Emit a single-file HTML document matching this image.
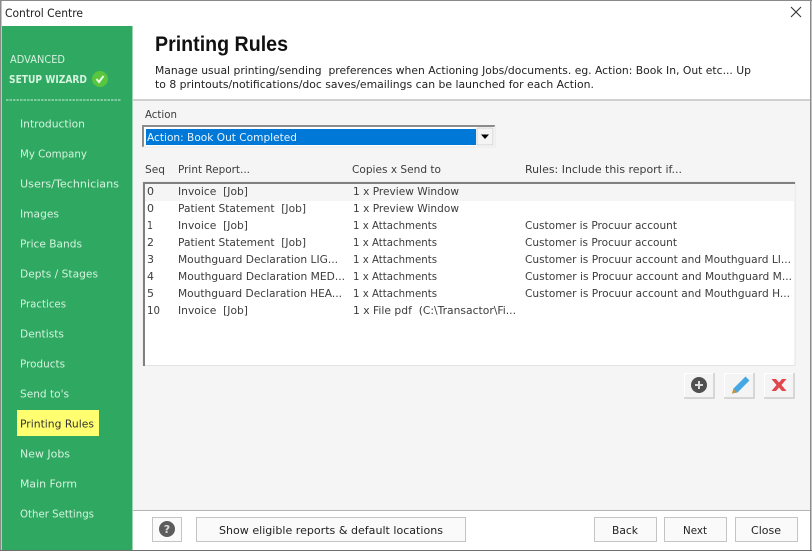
<!DOCTYPE html>
<html><head><meta charset="utf-8"><title>Control Centre</title>
<style>
html,body{margin:0;padding:0;background:#fff;width:812px;height:551px;overflow:hidden}
svg{display:block}
text{font-family:"DejaVu Sans",sans-serif;font-size:11px;fill:#3c3c3c;white-space:pre}
.s text{fill:#d6f3de}
.d text{fill:#222}
</style></head><body>
<svg width="812" height="551" viewBox="0 0 812 551" xmlns="http://www.w3.org/2000/svg" xml:space="preserve">
<rect width="812" height="551" fill="#fff"/>
<rect x="133" y="100" width="677" height="410" fill="#f5f5f5"/>
<rect x="133" y="99" width="677" height="2" fill="#d0d0d0"/>
<rect x="133" y="510" width="677" height="1" fill="#b4b4b4"/>
<rect x="0" y="0" width="812" height="1" fill="#8a8a8a"/>
<rect x="0" y="0" width="1.5" height="551" fill="#8a8a8a"/>
<rect x="810" y="0" width="1.5" height="551" fill="#8a8a8a"/>
<rect x="0" y="550" width="812" height="1" fill="#6e6e6e"/>
<rect x="2" y="26" width="130.500" height="524" fill="#2fa862"/>
<text x="5" y="17" textLength="78" lengthAdjust="spacingAndGlyphs" style="fill:#222;font-size:11.500px">Control Centre</text>
<path d="M791 7l10 10M801 7l-10 10" stroke="#333" stroke-width="1.100" fill="none"/>
<g class="s">
<text x="10" y="63" textLength="55" lengthAdjust="spacingAndGlyphs">ADVANCED</text>
<text x="9" y="83" textLength="78" lengthAdjust="spacingAndGlyphs" style="font-weight:700;font-size:10.500px">SETUP WIZARD</text>
<rect x="17" y="410" width="82" height="26" fill="#ffff70"/>
<text x="20" y="127.500" textLength="65" lengthAdjust="spacingAndGlyphs">Introduction</text>
<text x="20" y="157.500" textLength="67" lengthAdjust="spacingAndGlyphs">My Company</text>
<text x="20" y="187.500" textLength="99" lengthAdjust="spacingAndGlyphs">Users/Technicians</text>
<text x="20" y="217.500" textLength="39" lengthAdjust="spacingAndGlyphs">Images</text>
<text x="20" y="247.500" textLength="62" lengthAdjust="spacingAndGlyphs">Price Bands</text>
<text x="20" y="277.500" textLength="78" lengthAdjust="spacingAndGlyphs">Depts / Stages</text>
<text x="20" y="307.500" textLength="46" lengthAdjust="spacingAndGlyphs">Practices</text>
<text x="20" y="337.500" textLength="44" lengthAdjust="spacingAndGlyphs">Dentists</text>
<text x="20" y="367.500" textLength="45" lengthAdjust="spacingAndGlyphs">Products</text>
<text x="20" y="397.500" textLength="49" lengthAdjust="spacingAndGlyphs">Send to's</text>
<text x="20" y="427.500" textLength="74" lengthAdjust="spacingAndGlyphs" style="fill:#333">Printing Rules</text>
<text x="20" y="457.500" textLength="50" lengthAdjust="spacingAndGlyphs">New Jobs</text>
<text x="20" y="487.500" textLength="57" lengthAdjust="spacingAndGlyphs">Main Form</text>
<text x="20" y="517.500" textLength="74" lengthAdjust="spacingAndGlyphs">Other Settings</text>
</g>
<circle cx="100" cy="79" r="8" fill="#58c63e"/>
<path d="M96.500 79l2.500 3 4.500-6" stroke="#e8fbe4" stroke-width="2" fill="none"/>
<line x1="6" y1="100" x2="121" y2="100" stroke="#cfeeda" stroke-width="1" stroke-dasharray="2.500 1"/>

<text x="155" y="51" textLength="133" lengthAdjust="spacingAndGlyphs" style="font-family:'Liberation Sans',sans-serif;font-size:21px;font-weight:700;fill:#111">Printing Rules</text>
<g class="d">
<text x="155" y="74" textLength="596" lengthAdjust="spacingAndGlyphs">Manage usual printing/sending  preferences when Actioning Jobs/documents. eg. Action: Book In, Out etc... Up</text>
<text x="155" y="88" textLength="439" lengthAdjust="spacingAndGlyphs">to 8 printouts/notifications/doc saves/emailings can be launched for each Action.</text>
</g>
<text x="145" y="118" textLength="32" lengthAdjust="spacingAndGlyphs">Action</text>

<rect x="143" y="126" width="352" height="21" fill="#fff"/>
<path d="M143 147V126H495" fill="none" stroke="#8c8c8c" stroke-width="2"/>
<path d="M143 147H495V126" fill="none" stroke="#e6e6e6" stroke-width="1"/>
<rect x="146" y="129" width="330" height="16" fill="#0078d7"/>
<rect x="477" y="128" width="16" height="17" fill="#f4f4f4" stroke="#b0b0b0" stroke-width="0.500"/>
<path d="M481 134.500h8l-4 4.500z" fill="#000"/>
<text x="147" y="141" textLength="150" lengthAdjust="spacingAndGlyphs" style="fill:#e8f4ff">Action: Book Out Completed</text>

<text x="145" y="173" textLength="20" lengthAdjust="spacingAndGlyphs">Seq</text>
<text x="178" y="173" textLength="72" lengthAdjust="spacingAndGlyphs">Print Report...</text>
<text x="352" y="173" textLength="89" lengthAdjust="spacingAndGlyphs">Copies x Send to</text>
<text x="525" y="173" textLength="157" lengthAdjust="spacingAndGlyphs">Rules: Include this report if...</text>

<rect x="143" y="182" width="652" height="183.500" fill="#fff" stroke="#e4e4e4" stroke-width="1"/>
<rect x="145" y="184" width="649" height="17" fill="#f5f5f5"/>
<path d="M144 366V183H795" fill="none" stroke="#808080" stroke-width="2"/>

<text x="147" y="195" textLength="7" lengthAdjust="spacingAndGlyphs">0</text>
<text x="178" y="195" textLength="70" lengthAdjust="spacingAndGlyphs">Invoice  [Job]</text>
<text x="353" y="195" textLength="106" lengthAdjust="spacingAndGlyphs">1 x Preview Window</text>
<text x="147" y="212" textLength="7" lengthAdjust="spacingAndGlyphs">0</text>
<text x="178" y="212" textLength="128" lengthAdjust="spacingAndGlyphs">Patient Statement  [Job]</text>
<text x="353" y="212" textLength="106" lengthAdjust="spacingAndGlyphs">1 x Preview Window</text>
<text x="147" y="229" textLength="6" lengthAdjust="spacingAndGlyphs">1</text>
<text x="178" y="229" textLength="70" lengthAdjust="spacingAndGlyphs">Invoice  [Job]</text>
<text x="353" y="229" textLength="84" lengthAdjust="spacingAndGlyphs">1 x Attachments</text>
<text x="525" y="229" textLength="152" lengthAdjust="spacingAndGlyphs">Customer is Procuur account</text>
<text x="147" y="246" textLength="7" lengthAdjust="spacingAndGlyphs">2</text>
<text x="178" y="246" textLength="128" lengthAdjust="spacingAndGlyphs">Patient Statement  [Job]</text>
<text x="353" y="246" textLength="84" lengthAdjust="spacingAndGlyphs">1 x Attachments</text>
<text x="525" y="246" textLength="152" lengthAdjust="spacingAndGlyphs">Customer is Procuur account</text>
<text x="147" y="263" textLength="7" lengthAdjust="spacingAndGlyphs">3</text>
<text x="178" y="263" textLength="160" lengthAdjust="spacingAndGlyphs">Mouthguard Declaration LIG...</text>
<text x="353" y="263" textLength="84" lengthAdjust="spacingAndGlyphs">1 x Attachments</text>
<text x="525" y="263" textLength="266" lengthAdjust="spacingAndGlyphs">Customer is Procuur account and Mouthguard LI...</text>
<text x="147" y="280" textLength="7" lengthAdjust="spacingAndGlyphs">4</text>
<text x="178" y="280" textLength="167" lengthAdjust="spacingAndGlyphs">Mouthguard Declaration MED...</text>
<text x="353" y="280" textLength="84" lengthAdjust="spacingAndGlyphs">1 x Attachments</text>
<text x="525" y="280" textLength="267" lengthAdjust="spacingAndGlyphs">Customer is Procuur account and Mouthguard M...</text>
<text x="147" y="297" textLength="7" lengthAdjust="spacingAndGlyphs">5</text>
<text x="178" y="297" textLength="164" lengthAdjust="spacingAndGlyphs">Mouthguard Declaration HEA...</text>
<text x="353" y="297" textLength="84" lengthAdjust="spacingAndGlyphs">1 x Attachments</text>
<text x="525" y="297" textLength="265" lengthAdjust="spacingAndGlyphs">Customer is Procuur account and Mouthguard H...</text>
<text x="147" y="314" textLength="13" lengthAdjust="spacingAndGlyphs">10</text>
<text x="178" y="314" textLength="70" lengthAdjust="spacingAndGlyphs">Invoice  [Job]</text>
<text x="353" y="314" textLength="163" lengthAdjust="spacingAndGlyphs">1 x File pdf  (C:\Transactor\Fi...</text>

<g fill="#f4f4f4">
<rect x="684.500" y="373.500" width="29" height="24" stroke="#fff"/>
<rect x="724.500" y="373.500" width="29" height="24" stroke="#fff"/>
<rect x="764.500" y="373.500" width="29" height="24" stroke="#fff"/>
</g>
<path d="M714 373V398H684M754 373V398H724M794 373V398H764" fill="none" stroke="#c0c0c0" stroke-width="1.200"/>
<circle cx="699" cy="385" r="8" fill="#505050"/>
<path d="M695 385h8M699 381v8" stroke="#dcdcdc" stroke-width="2"/>
<path d="M732 393.500l1.500-5 12-12 4 4-12 12z" fill="#45a8e2"/>
<path d="M733.500 388.500l-1.500 5 5-1.200z" fill="#c9923a"/>
<path d="M771.500 379l4.500 0 3 3.500 3-3.500 4.500 0-5 6 5 6-4.500 0-3-3.500-3 3.500-4.500 0 5-6z" fill="#e0474c"/>

<g fill="#fafafa" stroke="#c4c4c4">
<rect x="152.500" y="517.500" width="29" height="24"/>
<rect x="196.500" y="517.500" width="269" height="24"/>
<rect x="594.500" y="517.500" width="62" height="24"/>
<rect x="664.500" y="517.500" width="62" height="24"/>
<rect x="735.500" y="517.500" width="62" height="24"/>
</g>
<circle cx="167" cy="529" r="8" fill="#5c5c5c"/>
<text x="163.800" y="533" style="font-size:11px;font-weight:700;fill:#dcdcdc">?</text>
<text x="219" y="534" textLength="224" lengthAdjust="spacingAndGlyphs" style="fill:#222">Show eligible reports &amp; default locations</text>
<text x="612" y="534" textLength="26" lengthAdjust="spacingAndGlyphs" style="fill:#222">Back</text>
<text x="683" y="534" textLength="24" lengthAdjust="spacingAndGlyphs" style="fill:#222">Next</text>
<text x="751" y="534" textLength="30" lengthAdjust="spacingAndGlyphs" style="fill:#222">Close</text>
</svg>
</body></html>
